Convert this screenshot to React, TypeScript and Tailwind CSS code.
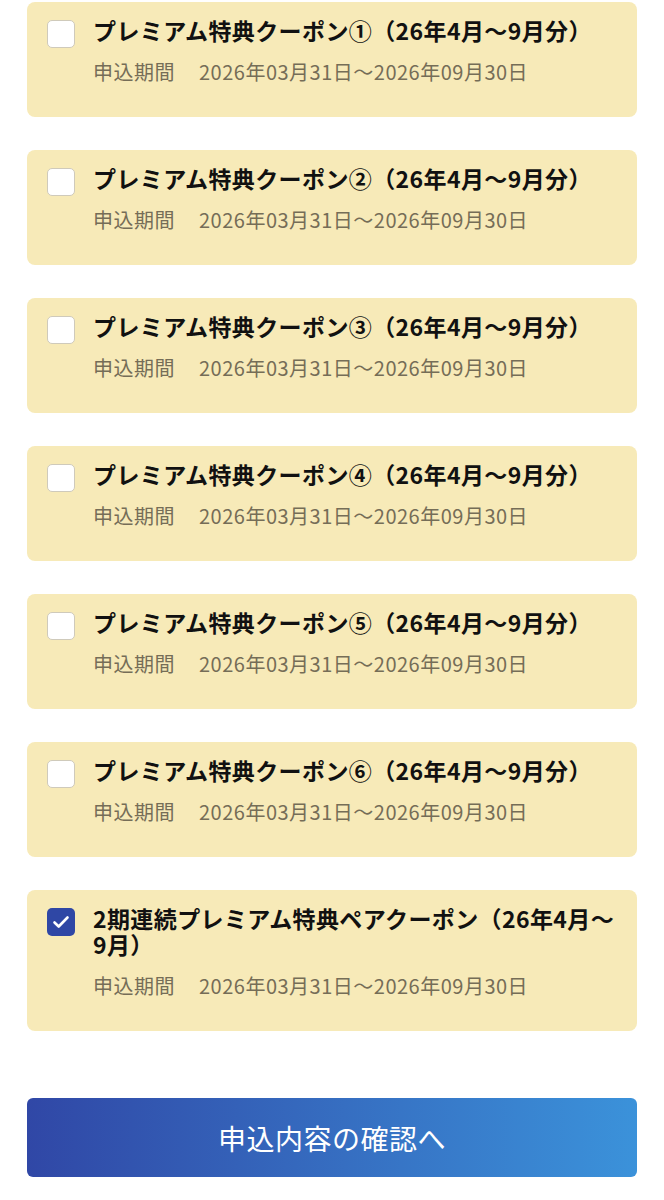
import { useState } from 'react';

interface Coupon {
  id: number;
  title: string;
  period: string;
}

const PERIOD = '2026年03月31日〜2026年09月30日';

const COUPONS: Coupon[] = [
  { id: 1, title: 'プレミアム特典クーポン①（26年4月〜9月分）', period: PERIOD },
  { id: 2, title: 'プレミアム特典クーポン②（26年4月〜9月分）', period: PERIOD },
  { id: 3, title: 'プレミアム特典クーポン③（26年4月〜9月分）', period: PERIOD },
  { id: 4, title: 'プレミアム特典クーポン④（26年4月〜9月分）', period: PERIOD },
  { id: 5, title: 'プレミアム特典クーポン⑤（26年4月〜9月分）', period: PERIOD },
  { id: 6, title: 'プレミアム特典クーポン⑥（26年4月〜9月分）', period: PERIOD },
  { id: 7, title: '2期連続プレミアム特典ペアクーポン（26年4月〜9月）', period: PERIOD },
];

const FONT = "font-['Noto_Sans_CJK_JP','Noto_Sans',sans-serif]";

function Checkbox({ checked, onChange }: { checked: boolean; onChange: () => void }) {
  return (
    <button
      type="button"
      onClick={onChange}
      className={
        checked
          ? 'w-[28px] h-[28px] shrink-0 rounded-[5px] bg-[#2f47a5] flex items-center justify-center'
          : 'w-[28px] h-[28px] shrink-0 rounded-[5px] bg-white border border-[#cfcabb]'
      }
    >
      {checked && (
        <svg width="22" height="22" viewBox="0 0 22 22" fill="none">
          <path d="M4.5 11.5l4.2 4 8.8-9" stroke="white" strokeWidth="2.6" strokeLinecap="round" strokeLinejoin="round" />
        </svg>
      )}
    </button>
  );
}

export default function App() {
  const [selected, setSelected] = useState<number[]>([7]);

  const toggle = (id: number) =>
    setSelected(s => (s.includes(id) ? s.filter(x => x !== id) : [...s, id]));

  return (
    <div className={`w-[664px] min-h-[1200px] bg-white px-[27px] pt-[2px] ${FONT}`}>
      <div className="flex flex-col gap-[33px]">
        {COUPONS.map(c => (
          <div
            key={c.id}
            className="bg-[#f7eab8] rounded-[8px] pl-[20px] pr-[20px] pt-[18px] pb-[31px] flex gap-[18px]"
          >
            <Checkbox checked={selected.includes(c.id)} onChange={() => toggle(c.id)} />
            <div className="flex-1">
              <p className="-mt-[3px] text-[23px] leading-[26px] tracking-[0.4px] font-bold text-[#111]">
                {c.title}
              </p>
              <p className="mt-[15px] text-[20px] leading-[28px] tracking-[0.5px] text-[#756d57]">
                申込期間<span className="ml-[24px]">{c.period}</span>
              </p>
            </div>
          </div>
        ))}
      </div>

      {/* Submit */}
      <button
        type="button"
        className="mt-[67px] w-full h-[79px] rounded-[6px] bg-gradient-to-r from-[#3047a6] to-[#3b92da] text-white text-[28px] tracking-[0.5px] font-normal"
      >
        申込内容の確認へ
      </button>
    </div>
  );
}
